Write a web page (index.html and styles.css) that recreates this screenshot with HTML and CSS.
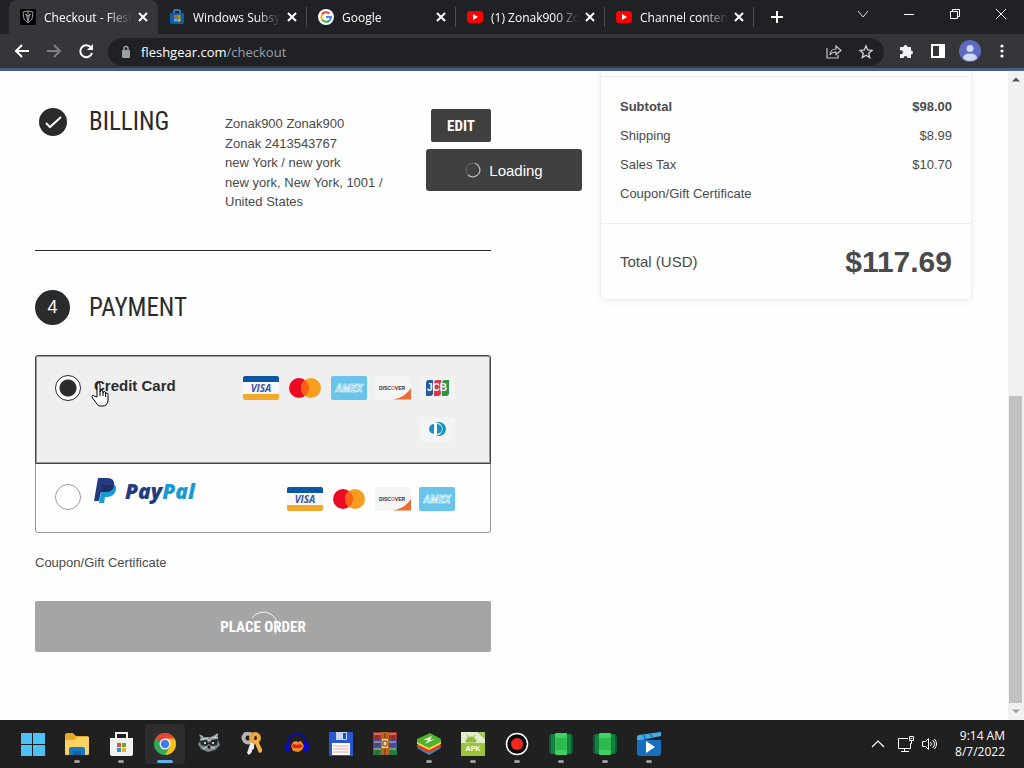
FILE: index.html
```html
<!DOCTYPE html>
<html lang="en">
<head>
    <meta charset="UTF-8">
    <title>Checkout - Fleshgear</title>
    <link rel="stylesheet" href="styles.css">
</head>
<body>

  <!-- shared icons -->
  <svg class="sprite" aria-hidden="true">
      <symbol id="close" viewBox="0 0 10 10">
          <path d="M1 1l8 8M9 1l-8 8" stroke="#fff" stroke-width="2"/>
      </symbol>
      <symbol id="youtube" viewBox="0 0 16 16">
          <rect x="0" y="2" width="16" height="12" rx="3" fill="#f00"/>
          <path d="M6 5v6l5-3z" fill="#fff"/>
      </symbol>
      <symbol id="visa" viewBox="0 0 36 24">
          <rect width="36" height="24" rx="2" fill="#f7f7f7"/>
          <path d="M2 0h32a2 2 0 0 1 2 2v4H0V2a2 2 0 0 1 2-2z" fill="#0d56a0"/>
          <path d="M0 18h36v4a2 2 0 0 1-2 2H2a2 2 0 0 1-2-2z" fill="#f3a92c"/>
          <text x="18" y="16" class="card-text" font-size="10" fill="#3a55a4">VISA</text>
      </symbol>
      <symbol id="mastercard" viewBox="0 0 36 24">
          <circle cx="12" cy="12" r="10" fill="#ea0a23"/>
          <circle cx="24" cy="12" r="10" fill="#f89e1f"/>
          <path d="M18 4a10 10 0 0 1 0 16a10 10 0 0 1 0-16z" fill="#fb6213"/>
      </symbol>
      <symbol id="amex" viewBox="0 0 36 24">
          <rect width="36" height="24" rx="2" fill="#68c4ea"/>
          <text x="18" y="16" class="card-text" font-size="10" fill="#68c4ea" stroke="#fff" stroke-width="0.6">AMEX</text>
      </symbol>
      <symbol id="discover" viewBox="0 0 36 24">
          <rect width="36" height="24" rx="2" fill="#f5f5f5"/>
          <path d="M36 12v11.500H18q12-2 18-11.500z" fill="#ee6b32"/>
          <text x="4" y="14" class="discover-text" font-size="5" fill="#333">DISC<tspan fill="#ee6b32">O</tspan>VER</text>
      </symbol>
      <symbol id="jcb" viewBox="0 0 36 24">
          <rect width="36" height="24" rx="2" fill="#f2f2f2"/>
          <path d="M10 4h4v13q0 3-3 3H7V7q0-3 3-3z" fill="#27579f"/>
          <path d="M18 4h4v13q0 3-3 3h-4V7q0-3 3-3z" fill="#d63a45"/>
          <path d="M26 4h4v13q0 3-3 3h-4V7q0-3 3-3z" fill="#2e9344"/>
          <text x="18" y="15" class="jcb-text" font-size="10" fill="#fff">JCB</text>
      </symbol>
      <symbol id="diners" viewBox="0 0 36 24">
          <rect width="36" height="24" rx="2" fill="#f4f4f4"/>
          <path d="M17 5h3a7 7 0 0 1 0 14h-3z" fill="#1a93c2"/>
          <circle cx="17" cy="12" r="6.500" fill="#fff"/>
          <path d="M15 7a5 5 0 0 0 0 10zM18 7a5 5 0 0 1 0 10z" fill="#1a93c2"/>
      </symbol>
      <symbol id="emulator" viewBox="0 0 24 24">
          <rect x="0" y="3" width="6" height="18" rx="1" fill="#0b5a31"/>
          <rect x="18" y="3" width="6" height="18" rx="1" fill="#0b5a31"/>
          <rect x="2" y="2" width="5" height="20" fill="#13813f"/>
          <rect x="17" y="2" width="5" height="20" fill="#13813f"/>
          <rect x="6" y="1" width="12" height="22" rx="1" fill="#41d160"/>
          <path d="M6 6h12v12H6z" fill="#2fb951"/>
      </symbol>
  </svg>

  <header class="browser">
      <div class="tab-strip">
          <div class="tab active">
              <svg class="favicon" viewBox="0 0 16 16">
                  <rect width="16" height="16" fill="#000"/>
                  <path d="M3 3l5-1 5 1-1 7-4 4-4-4zM8 2v12M5 5l3 2 3-2M6 5l2 7 2-7" fill="none" stroke="#999"/>
              </svg>
              <span class="title">Checkout - Flesh</span>
              <button class="icon-button" aria-label="Close tab"><svg width="10" height="10"><use href="#close"/></svg></button>
          </div>
          <div class="tab">
              <svg class="favicon" viewBox="0 0 16 16">
                  <path d="M5 4V2q0-1 1-1h4q1 0 1 1v2" fill="none" stroke="#2b9be6" stroke-width="1.500"/>
                  <path d="M1 4h14v9q0 2-2 2H3q-2 0-2-2z" fill="#125da8"/>
                  <path d="M5 6h3v3H5z" fill="#f25022"/>
                  <path d="M8.500 6h3v3h-3z" fill="#7fba00"/>
                  <path d="M5 9.500h3v3H5z" fill="#35b5f1"/>
                  <path d="M8.500 9.500h3v3h-3z" fill="#ffb900"/>
              </svg>
              <span class="title">Windows Subsy</span>
              <button class="icon-button" aria-label="Close tab"><svg width="10" height="10"><use href="#close"/></svg></button>
          </div>
          <div class="tab">
              <svg class="favicon" viewBox="0 0 16 16">
                  <circle cx="8" cy="8" r="8" fill="#fff"/>
                  <g fill="none" stroke-width="2">
                      <path d="M4 5.500A5 5 0 0 1 11.500 4.500" stroke="#ea4335"/>
                      <path d="M4 5.500a5 5 0 0 0 0 5" stroke="#fbbc05"/>
                      <path d="M4 10.500a5 5 0 0 0 7.500 1" stroke="#34a853"/>
                      <path d="M11.500 11.500A5 5 0 0 0 13 8H8" stroke="#4285f4"/>
                  </g>
              </svg>
              <span class="title">Google</span>
              <button class="icon-button" aria-label="Close tab"><svg width="10" height="10"><use href="#close"/></svg></button>
          </div>
          <div class="tab">
              <svg class="favicon"><use href="#youtube"/></svg>
              <span class="title">(1) Zonak900 Zo</span>
              <button class="icon-button" aria-label="Close tab"><svg width="10" height="10"><use href="#close"/></svg></button>
          </div>
          <div class="tab">
              <svg class="favicon"><use href="#youtube"/></svg>
              <span class="title">Channel conten</span>
              <button class="icon-button" aria-label="Close tab"><svg width="10" height="10"><use href="#close"/></svg></button>
          </div>
          <button class="icon-button new-tab" aria-label="New tab">
              <svg width="12" height="12" viewBox="0 0 12 12"><path d="M6 0v12M0 6h12" stroke="#fff" stroke-width="2"/></svg>
          </button>
          <div class="window-buttons">
              <button class="icon-button" aria-label="Search tabs"><svg width="12" height="12" viewBox="0 0 12 12"><path d="M1 3l5 6 5-6" fill="none" stroke="#ddd"/></svg></button>
              <button class="icon-button" aria-label="Minimize"><svg width="12" height="12" viewBox="0 0 12 12"><path d="M1 6.500h10" stroke="#fff"/></svg></button>
              <button class="icon-button" aria-label="Restore"><svg width="12" height="12" viewBox="0 0 12 12"><path d="M1.500 3.500h7v7h-7zM3.500 3.500v-2h7v7h-2" fill="none" stroke="#fff"/></svg></button>
              <button class="icon-button" aria-label="Close window"><svg width="12" height="12" viewBox="0 0 12 12"><path d="M1 1l10 10M11 1L1 11" stroke="#fff"/></svg></button>
          </div>
      </div>

      <div class="toolbar">
          <button class="icon-button" aria-label="Back"><svg width="16" height="16" viewBox="0 0 16 16"><path d="M15 8H2M8 2L2 8l6 6" fill="none" stroke="#fff" stroke-width="2"/></svg></button>
          <button class="icon-button" aria-label="Forward"><svg width="16" height="16" viewBox="0 0 16 16"><path d="M1 8h13M8 2l6 6-6 6" fill="none" stroke="#808184" stroke-width="2"/></svg></button>
          <button class="icon-button" aria-label="Reload"><svg width="16" height="16" viewBox="0 0 16 16"><path d="M13 4.500A6 6 0 1 0 14 10" fill="none" stroke="#fff" stroke-width="2"/><path d="M15 1v6H9z" fill="#fff"/></svg></button>
          <div class="omnibox">
              <svg width="10" height="14" viewBox="0 0 10 14"><rect x="1" y="5" width="8" height="8" rx="1" fill="#9aa0a6"/><path d="M3 6V3.500a2 2 0 0 1 4 0V6" fill="none" stroke="#9aa0a6" stroke-width="1.500"/></svg>
              <span class="url">fleshgear.com<span class="path">/checkout</span></span>
              <button class="icon-button" aria-label="Share"><svg width="16" height="16" viewBox="0 0 16 16" fill="none" stroke="#c4c7ca" stroke-width="1.200"><path d="M1 4v10h11v-3M4 11c0-4 3-6 6-6V2l5 4.500-5 4V8c-3 0-5 1-6 3z"/></svg></button>
              <button class="icon-button" aria-label="Bookmark"><svg width="16" height="16" viewBox="0 0 16 16"><path d="M8 2l1.700 4 4.300.400-3.300 2.800 1 4.300L8 11.200l-3.700 2.300 1-4.300L2 6.400 6.300 6z" fill="none" stroke="#d4d6d8" stroke-width="1.300"/></svg></button>
          </div>
          <button class="icon-button" aria-label="Extensions"><svg width="16" height="16" viewBox="0 0 16 16"><path d="M2 4h3.500a2 2 0 1 1 4 0H13v3.500a2 2 0 1 1 0 4V15H9.500a2 2 0 1 0-4 0H2v-4a2 2 0 1 0 0-3.500z" fill="#f1f3f4"/></svg></button>
          <button class="icon-button" aria-label="Side panel"><svg width="16" height="16" viewBox="0 0 16 16"><path d="M1 1h14v14H1zM3 3v10h6V3z" fill="#fff" fill-rule="evenodd"/></svg></button>
          <button class="icon-button" aria-label="Profile"><svg width="22" height="22" viewBox="0 0 22 22"><circle cx="11" cy="11" r="11" fill="#5c6bc0"/><circle cx="11" cy="8.500" r="3.500" fill="#d0d8f4"/><path d="M4 18.500q0-5 7-5t7 5a11 11 0 0 1-14 0z" fill="#d0d8f4"/></svg></button>
          <button class="icon-button" aria-label="Menu"><svg width="16" height="16" viewBox="0 0 16 16" fill="#fff"><circle cx="8" cy="3" r="1.600"/><circle cx="8" cy="8" r="1.600"/><circle cx="8" cy="13" r="1.600"/></svg></button>
      </div>
  </header>

  <div class="viewport">
      <main class="checkout">
          <form class="steps">
              <section class="step billing">
                  <span class="marker"><svg width="28" height="28" viewBox="0 0 28 28"><circle cx="14" cy="14" r="14" fill="#2b2b2b"/><path d="M7 15l4 4 11-10" fill="none" stroke="#fff" stroke-width="2"/></svg></span>
                  <h2>BILLING</h2>
                  <address>
                      Zonak900 Zonak900<br>
                      Zonak 2413543767<br>
                      new York / new york<br>
                      new york, New York, 1001 / United States
                  </address>
                  <div class="edit">
                      <button type="button" class="edit-button">EDIT</button>
                      <div class="loading" role="status">
                          <svg width="16" height="16" viewBox="0 0 16 16" fill="none"><circle cx="8" cy="8" r="7" stroke="#666"/><path d="M10 1.300A7 7 0 1 1 3 13" stroke="#bbb" stroke-width="1.200"/></svg>
                          Loading
                      </div>
                  </div>
              </section>

              <section class="step payment">
                  <span class="marker"><span class="number">4</span></span>
                  <h2>PAYMENT</h2>
              </section>

              <div class="methods">
                  <div class="method selected">
                      <input type="radio" name="method" id="credit" checked>
                      <label for="credit">Credit Card</label>
                      <div class="cards">
                          <svg><use href="#visa"/></svg>
                          <svg><use href="#mastercard"/></svg>
                          <svg><use href="#amex"/></svg>
                          <svg><use href="#discover"/></svg>
                          <svg><use href="#jcb"/></svg>
                          <svg><use href="#diners"/></svg>
                      </div>
                      <svg class="pointer" viewBox="0 0 18 25">
                          <path d="M6 15V3q0-2 1.500-2T9 3v7q0-1.500 1.500-1.500T12 10v1q0-1.500 1.300-1.500T14.600 11v1q0-1 1.200-1T17 12.500V18q0 3-2 5-1 1-3 1H9q-2 0-3-2l-4.500-6q-1-2 0-2.500t2.500 1z" fill="#fff" stroke="#000"/>
                          <path d="M9 10v4M12 11v3M14.600 12v3" stroke="#000"/>
                      </svg>
                  </div>
                  <div class="method paypal">
                      <input type="radio" name="method" id="paypal">
                      <label for="paypal">
                          <svg width="108" height="28" viewBox="0 0 108 28" role="img" aria-label="PayPal">
                              <path d="M9 6h8q6 1 5 7-2 7-9 7h-2l-1 6H5z" fill="#179bd7"/>
                              <path d="M4 1h9q8 0 7 7-1 7-9 7H7l-2 9H0z" fill="#253b80"/>
                              <path d="M8 8h8q3 0 4 1-1 6-9 6H7z" fill="#222d65"/>
                              <text x="31" y="22" class="paypal-text" font-size="21" fill="#253b80">Pay<tspan fill="#179bd7">Pal</tspan></text>
                          </svg>
                      </label>
                      <div class="cards">
                          <svg><use href="#visa"/></svg>
                          <svg><use href="#mastercard"/></svg>
                          <svg><use href="#discover"/></svg>
                          <svg><use href="#amex"/></svg>
                      </div>
                  </div>
              </div>

              <p class="coupon">Coupon/Gift Certificate</p>

              <button type="button" class="place-order">
                  PLACE ORDER
                  <svg class="spinner" viewBox="0 0 30 30"><path d="M4 7a14 14 0 1 1 23 16" fill="none" stroke="#f4f4f4"/></svg>
              </button>
          </form>

          <aside class="summary">
              <dl class="lines">
                  <div class="line subtotal"><dt>Subtotal</dt><dd>$98.00</dd></div>
                  <div class="line"><dt>Shipping</dt><dd>$8.99</dd></div>
                  <div class="line"><dt>Sales Tax</dt><dd>$10.70</dd></div>
                  <div class="line"><dt>Coupon/Gift Certificate</dt></div>
              </dl>
              <dl class="total">
                  <dt>Total (USD)</dt>
                  <dd>$117.69</dd>
              </dl>
          </aside>
      </main>

      <div class="scrollbar">
          <svg viewBox="0 0 16 16"><path d="M4 10l4-4 4 4z" fill="#505050"/></svg>
          <div class="track"><div class="thumb"></div></div>
          <svg viewBox="0 0 16 16"><path d="M4 6l4 4 4-4z" fill="#a3a3a3"/></svg>
      </div>
  </div>

  <footer class="taskbar">
      <nav class="apps">
          <button class="app" aria-label="Start"><svg viewBox="0 0 24 24"><path d="M0 1h11v11H0zM12 1h12v11H12zM0 13h11v11H0zM12 13h12v11H12z" fill="#4cc2f8"/></svg></button>
          <button class="app running" aria-label="File Explorer"><svg viewBox="0 0 24 24"><path d="M0 3q0-2 2-2h6l3 3h11q2 0 2 2v15q0 2-2 2H0z" fill="#e5a82a"/><path d="M0 8h9l3-3h12v16q0 2-2 2H2q-2 0-2-2z" fill="#fbd162"/><path d="M4 23v-6q0-2 2-2h12q2 0 2 2v6z" fill="#1878c0"/><path d="M8 19h8v4H8z" fill="#1562a0"/></svg></button>
          <button class="app running" aria-label="Microsoft Store"><svg viewBox="0 0 24 24"><path d="M7 7V1h11v6" fill="none" stroke="#eee" stroke-width="2"/><path d="M1 6h23v16q0 2-2 2H3q-2 0-2-2z" fill="#f2f2f2"/><path d="M8 11h4v4H8z" fill="#e5502c"/><path d="M13 11h4v4h-4z" fill="#6da720"/><path d="M8 16h4v4H8z" fill="#2693cf"/><path d="M13 16h4v4h-4z" fill="#f0b020"/></svg></button>
          <button class="app running current" aria-label="Chrome"><svg viewBox="0 0 24 24"><circle cx="12" cy="12" r="11" fill="#34a853"/><path d="M12 12L2.500 6.500a11 11 0 0 1 19 0z" fill="#ea4335"/><path d="M12 12V6.500h9.500A11 11 0 0 1 12 23l5-8z" fill="#fbc116"/><circle cx="12" cy="12" r="5.500" fill="#fff"/><circle cx="12" cy="12" r="4.300" fill="#3b7ded"/></svg></button>
          <button class="app" aria-label="Raccoon"><svg viewBox="0 0 24 24"><path d="M2 2l5 3h7l7-4v7l2 5-5 5-7 2-7-3-3-5 3-4z" fill="#7d878a"/><path d="M3 9l6-1 3 3 3-3 6-1-1 6-5 1-3-2-3 2-5-1z" fill="#20292c"/><path d="M3 8l7-2 2 3 3-4 6 1M6 17l4-2h3l5 1M4 3l3 5M20 2l-3 5" fill="none" stroke="#d0d6d7"/><circle cx="8" cy="11" r="1" fill="#fff"/><circle cx="16" cy="11" r="1" fill="#fff"/><circle cx="12" cy="15" r="1.500" fill="#111"/></svg></button>
          <button class="app" aria-label="Keys"><svg viewBox="0 0 24 24"><circle cx="7" cy="6" r="4.500" fill="none" stroke="#b5b5b5" stroke-width="4"/><path d="M10 9l-4 12 2 2 3-3v-2l2-1v-3l1-4z" fill="#e8e8e8"/><circle cx="14" cy="6" r="4" fill="none" stroke="#efa43d" stroke-width="4"/><path d="M13 9l5 12 3-1v-3l-1-2-1-2-2-5z" fill="#f4b14c"/></svg></button>
          <button class="app" aria-label="Audacity"><svg viewBox="0 0 24 24"><path d="M3 15C3 5 7 2 12 2s9 3 9 13" fill="none" stroke="#0c0ca0" stroke-width="2"/><path d="M0 15q0-5 5-5v10q-5 0-5-5zM24 15q0-5-5-5v10q5 0 5-5z" fill="#0a0acb"/><path d="M6 14l2-4 3-1 2 1 3-1 3 5-2 4-4 2-5-1z" fill="#f08c28"/><path d="M6 14l3-2 3 1 3-1 3 2-3 2H9z" fill="#e1231f"/></svg></button>
          <button class="app" aria-label="Disk"><svg viewBox="0 0 24 24"><path d="M0 0h23l1 1v23H1l-1-1z" fill="#2858d1"/><path d="M7 0h11v8H7z" fill="#c3d6ed"/><path d="M14 1h3v6h-3z" fill="#2453b8"/><path d="M3 11h18v12H3z" fill="#fff"/><path d="M4 14h16M4 17h16M4 20h16" stroke="#e6a0a0"/></svg></button>
          <button class="app" aria-label="WinRAR"><svg viewBox="0 0 24 24"><path d="M0 0h24v8H0z" fill="#a82d30"/><path d="M0 8h24v7H0z" fill="#414e9a"/><path d="M0 15h24v8H0z" fill="#287a43"/><path d="M1 2h22M1 10h22M1 17h22" stroke="#dfb7a0"/><path d="M8 0h8v23H8z" fill="#b8651f"/><path d="M9 7h6v9H9z" fill="#f7d69c"/><path d="M10 9h4v5h-4zM12 1v5M12 17v6M4 3v4M4 11v3M4 18v4M20 3v4" fill="none" stroke="#6e3314"/></svg></button>
          <button class="app running" aria-label="BlueStacks"><svg viewBox="0 0 24 24"><path d="M0 16l12-6 12 6-12 7z" fill="#2a93cf"/><path d="M0 13l12-6 12 6v2l-12 6-12-6z" fill="#dc3b30"/><path d="M0 10l12-6 12 6v2l-12 6-12-6z" fill="#ffd342"/><path d="M0 7l13-6 11 6v3l-12 6-12-6z" fill="#4fb130"/><path d="M6 8l9-4-2 4 5-1-10 5 3-4z" fill="#ecf8d8"/></svg></button>
          <button class="app running" aria-label="APK"><svg viewBox="0 0 24 24"><path d="M0 0h17l7 7v17H0z" fill="#e2eecb"/><path d="M17 0h7v7z" fill="#a6c956"/><path d="M0 11h24v13H0z" fill="#9cc43b"/><path d="M5 10a5 5 0 0 1 10 0zM6 3l2 3M14 3l-2 3" fill="#92ba38" stroke="#92ba38"/><text x="12" y="19" class="apk-text" font-size="7" fill="#fff">APK</text></svg></button>
          <button class="app running" aria-label="Recorder"><svg viewBox="0 0 24 24"><circle cx="12" cy="12" r="10.500" fill="#080808" stroke="#fff" stroke-width="1.500"/><circle cx="12" cy="12" r="6" fill="#f0271f"/></svg></button>
          <button class="app running" aria-label="Emulator"><svg><use href="#emulator"/></svg></button>
          <button class="app running" aria-label="Emulator 2"><svg><use href="#emulator"/></svg></button>
          <button class="app running" aria-label="Movies"><svg viewBox="0 0 24 24"><path d="M0 5q0-2 2-2l22-3v4L0 9z" fill="#45aee9"/><path d="M6 3l3 4M13 2l3 4" stroke="#1c7cc4" stroke-width="2"/><path d="M0 8h24v13q0 3-3 3H3q-3 0-3-3z" fill="#176fc0"/><path d="M9 9v12l9-6z" fill="#fff"/></svg></button>
      </nav>
      <div class="tray">
          <svg width="14" height="14" viewBox="0 0 14 14"><path d="M1 10l6-6 6 6" fill="none" stroke="#fff" stroke-width="1.200"/></svg>
          <svg width="18" height="18" viewBox="0 0 18 18" fill="none" stroke="#fff"><path d="M11 3.500H1.500v10h12v-5M7.500 13.500v3M4 16.500h8M12.500 1.500h4v4h-4zM14.500 5.500v3h-1v5M13.500 3.500h2"/></svg>
          <svg width="16" height="16" viewBox="0 0 16 16" fill="none" stroke="#fff"><path d="M1.500 5.500h3l3-3v11l-3-3h-3zM9.500 6q2 2 0 4M11.500 4q4 4 0 8M13.500 3q4 5 0 10"/></svg>
          <div class="clock">9:14 AM<br>8/7/2022</div>
      </div>
  </footer>

</body>
</html>
```
FILE: styles.css
```css
* {
    box-sizing: border-box;
}

body {
    margin: 0;
    height: 100vh;
    display: flex;
    flex-direction: column;
    overflow: hidden;
    font-family: "Liberation Sans", Arial, sans-serif;
    font-size: 13px;
    color: #4a4a4a;
    background: #fefefe;
}

button {
    border: none;
    padding: 0;
    cursor: pointer;
}

.sprite {
    display: none;
}

.icon-button {
    display: flex;
    align-items: center;
    justify-content: center;
    background: none;
}

/* browser */
.browser {
    background: #35363a;
    border-bottom: 3px solid #45617f;
    font-family: "Open Sans", "Noto Sans", sans-serif;
    font-size: 12px;
    color: #fff;
}

.tab-strip {
    display: flex;
    height: 34px;
    padding-left: 9px;
    background: #202124;
}

.tab {
    display: flex;
    align-items: center;
    flex: 0 1 149px;
    min-width: 0;
    padding: 0 10px 0 11px;
    position: relative;
}

.tab.active {
    background: #35363a;
    border-radius: 8px 8px 0 0;
}

.tab:not(.active)::after {
    content: "";
    position: absolute;
    right: 0;
    width: 1px;
    height: 20px;
    background: #4c4e52;
}

.favicon {
    width: 16px;
    height: 16px;
    flex: none;
}

.title {
    flex: 1;
    min-width: 0;
    margin: 0 4px 0 8px;
    white-space: nowrap;
    overflow: hidden;
    -webkit-mask-image: linear-gradient(to right, #000 70%, transparent 98%);
    mask-image: linear-gradient(to right, #000 70%, transparent 98%);
}

.new-tab {
    width: 45px;
}

.window-buttons {
    display: flex;
    margin-left: auto;
    height: 28px;
}

.window-buttons .icon-button {
    width: 46px;
}

.toolbar {
    display: flex;
    align-items: center;
    height: 34px;
    padding: 0 6px;
}

.toolbar > .icon-button {
    width: 32px;
    height: 28px;
}

.omnibox {
    flex: 1;
    display: flex;
    align-items: center;
    gap: 10px;
    height: 28px;
    margin: 2px 6px 0 6px;
    padding: 0 7px 0 13px;
    border-radius: 14px;
    background: #202124;
}

.omnibox .icon-button {
    width: 22px;
}

.url {
    flex: 1;
    font-size: 13px;
}

.path {
    color: #9aa0a6;
}

/* page */
.viewport {
    flex: 1;
    display: flex;
    min-height: 0;
}

.checkout {
    flex: 1;
    display: grid;
    grid-template-columns: 456fr 372fr;
    align-items: start;
    gap: 109px;
    padding: 0 36px 0 35px;
    overflow: hidden;
}

.steps {
    min-width: 0;
}

.step {
    display: flex;
    align-items: flex-start;
}

.marker {
    display: flex;
    align-items: center;
    justify-content: center;
    flex: none;
    width: 35px;
    height: 35px;
    margin-right: 19px;
}

.number {
    width: 35px;
    line-height: 35px;
    border-radius: 50%;
    background: #2b2b2b;
    color: #fff;
    font-size: 18px;
    text-align: center;
}

h2 {
    width: 136px;
    margin: 0;
    font-family: "Roboto Condensed", "Liberation Sans Narrow", Roboto, sans-serif;
    font-size: 25px;
    font-weight: normal;
    line-height: 35px;
    color: #2b2b2b;
}

.billing {
    padding-top: 33px;
    height: 180px;
    border-bottom: 1px solid #2b2b2b;
}

address {
    flex: 1;
    max-width: 166px;
    margin-top: 10px;
    font-style: normal;
    line-height: 1.5;
}

.edit {
    position: relative;
    margin: 5px 0 0 auto;
}

.edit-button {
    width: 60px;
    height: 33px;
    border-radius: 2px;
    background: #404040;
    color: #fff;
    font-family: "Roboto Condensed", "Liberation Sans Narrow", Roboto, sans-serif;
    font-size: 15px;
    font-weight: bold;
}

.loading {
    position: absolute;
    top: 40px;
    left: -5px;
    display: flex;
    align-items: center;
    justify-content: center;
    gap: 8px;
    width: 156px;
    height: 42px;
    border-radius: 3px;
    background: #404040;
    color: #fff;
    font-size: 15px;
}

.payment {
    margin: 39px 0 30px;
}

.methods {
    border: 1px solid #999;
    border-radius: 3px;
}

.method {
    position: relative;
    display: flex;
    align-items: flex-start;
    min-height: 68px;
    padding: 20px 35px 16px 19px;
}

.method.selected {
    min-height: 109px;
    margin: -1px -1px 0;
    border: 1px solid #444;
    outline: 1px solid #999;
    outline-offset: -2px;
    border-radius: 3px 3px 0 0;
    background: #efefef;
}

.method input {
    appearance: none;
    flex: none;
    width: 26px;
    height: 26px;
    margin: 0 13px 0 0;
    border: 1px solid #999;
    border-radius: 50%;
    background: #fff;
}

.method.selected input {
    margin-top: -1px;
    border-color: #2b2b2b;
    background: radial-gradient(circle, #2b2b2b 8px, #fff 9px);
}

.method label {
    font-size: 15px;
    font-weight: bold;
    line-height: 20px;
    color: #2b2b2b;
}

.paypal label {
    margin-top: -7px;
}

.paypal label svg {
    display: block;
}

.cards {
    display: flex;
    flex-wrap: wrap;
    justify-content: flex-end;
    gap: 17px 8px;
    max-width: 220px;
    margin-left: auto;
}

.paypal .cards {
    margin-top: 3px;
}

.cards svg {
    width: 36px;
    height: 24px;
}

.card-text,
.paypal-text {
    font-family: "Open Sans", sans-serif;
    font-weight: bold;
    font-style: italic;
}

.paypal-text {
    font-weight: 800;
}

.card-text,
.jcb-text,
.apk-text {
    text-anchor: middle;
}

.discover-text,
.jcb-text,
.apk-text {
    font-family: "Liberation Sans", Arial, sans-serif;
    font-weight: bold;
}

.pointer {
    position: absolute;
    top: 26px;
    left: 55px;
    width: 18px;
    height: 25px;
}

.coupon {
    margin: 20px 0 28px;
    line-height: 20px;
}

.place-order {
    position: relative;
    display: block;
    width: 100%;
    height: 51px;
    border-radius: 2px;
    background: #a5a5a5;
    color: #fff;
    font-family: "Roboto Condensed", "Liberation Sans Narrow", Roboto, sans-serif;
    font-size: 15px;
    font-weight: bold;
}

.spinner {
    position: absolute;
    top: 10px;
    left: calc(50% - 15px);
    width: 30px;
    height: 30px;
}

/* order summary */
.summary {
    border: 1px solid #efefef;
    border-top: none;
    border-radius: 0 0 4px 4px;
    box-shadow: 0 2px 6px rgba(0, 0, 0, 0.06);
}

.summary dl,
.summary dd {
    margin: 0;
}

.summary .lines {
    margin-top: 5px;
    padding: 15px 19px;
    border-top: 1px solid #eee;
    border-bottom: 1px solid #eee;
}

.line,
.total {
    display: flex;
    justify-content: space-between;
    align-items: center;
}

.line {
    line-height: 29px;
}

.subtotal {
    font-weight: bold;
}

.total {
    height: 75px;
    padding: 0 19px;
}

.total dt {
    font-size: 15px;
}

.total dd {
    font-size: 30px;
    font-weight: bold;
}

.scrollbar {
    display: flex;
    flex-direction: column;
    width: 16px;
    background: #f1f1f1;
}

.scrollbar svg {
    width: 16px;
    height: 17px;
}

.track {
    flex: 1;
    display: flex;
    flex-direction: column;
    justify-content: flex-end;
    padding: 0 2px 0 1px;
}

.thumb {
    height: 50%;
    background: #c1c1c1;
}

/* taskbar */
.taskbar {
    display: flex;
    justify-content: space-between;
    height: 48px;
    padding: 0 19px 0 13px;
    background: #202020;
    color: #fff;
}

.apps {
    display: flex;
    align-items: center;
    gap: 4px;
}

.app {
    position: relative;
    display: flex;
    align-items: center;
    justify-content: center;
    width: 40px;
    height: 40px;
    border-radius: 4px;
    background: none;
}

.app svg {
    width: 24px;
    height: 24px;
}

.app.current {
    background: #2d2d2d;
}

.app.running::after {
    content: "";
    position: absolute;
    bottom: 1px;
    width: 6px;
    height: 3px;
    border-radius: 2px;
    background: #9a9a9a;
}

.app.current::after {
    width: 16px;
    background: #5fb2ec;
}

.tray {
    display: flex;
    align-items: center;
    gap: 12px;
}

.tray svg + svg + svg {
    margin-left: -6px;
}

.clock {
    margin-left: 6px;
    font-family: "Open Sans", "Noto Sans", sans-serif;
    font-size: 12px;
    line-height: 16px;
    text-align: right;
}
```
